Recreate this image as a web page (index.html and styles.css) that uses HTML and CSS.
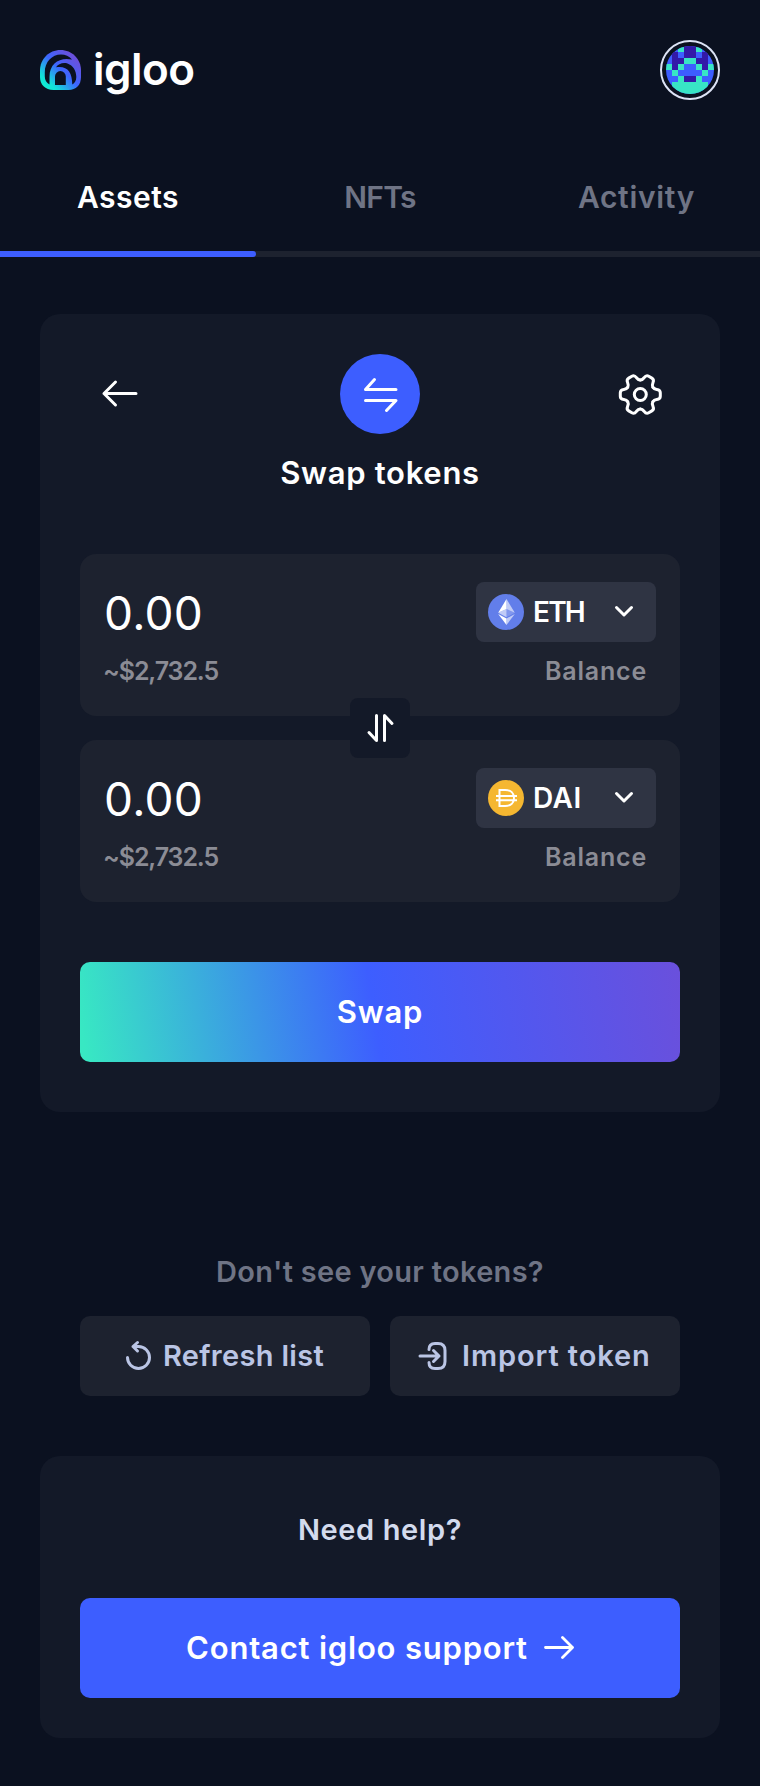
FILE: index.html
```html
<!DOCTYPE html>
<html lang="en">
<head>
<meta charset="utf-8">
<title>igloo</title>
<link rel="stylesheet" href="styles.css">
</head>
<body>
<header class="header">
  <div class="brand">
    <svg width="42" height="41" viewBox="0 0 42 41">
      <defs><linearGradient id="ice" x1="4" y1="38" x2="34" y2="7" gradientUnits="userSpaceOnUse"><stop stop-color="#0ff0d0"/><stop offset=".18" stop-color="#12e0d8"/><stop offset=".58" stop-color="#3d66ff"/><stop offset="1" stop-color="#6a50dc"/></linearGradient></defs>
      <path fill="url(#ice)" d="M20.500 0C32 0 41 9 41 20.500V27c0 8-5 13-12.500 13h-15C5 40 0 34.500 0 27v-6.500C0 9 9 0 20.500 0z"/>
      <path fill="#0b1120" d="M9.500 34.500C6.500 33 4.800 30 4.800 26.500v-4C4.800 12 12 4.600 21 4.600c4.500 0 8 1.600 11 5C20 7 9.500 13 9.500 27z"/>
      <path fill="#0b1120" d="M16 17.200C18 14 23 12 27.500 13.500 33 15.500 36.300 20.500 36.300 27c0 3.500-1.500 6-4 7.500C32 22 27.500 15.500 16 17.200z"/>
      <path fill="#0b1120" d="M15 35v-8.500a5.400 5.400 0 0 1 10.800 0V35z"/>
    </svg>
    <span class="brand-name">igloo</span>
  </div>
  <div class="avatar">
    <svg width="48" height="48" viewBox="0 0 48 48">
      <clipPath id="disc"><circle cx="24" cy="24" r="24"/></clipPath>
      <g clip-path="url(#disc)">
        <path fill="#3d5eff" d="M0 0h48v48H0z"/>
        <path fill="#3319a8" d="M18 0h12v12H18zM6 6h6v18H6zM12 12h6v6h-6zM36 6h6v18h-6zM30 12h6v6h-6zM18 30h12v6H18z"/>
        <path fill="#38e5c5" d="M12 0h6v6h-6zM30 0h6v6h-6zM18 12h12v6H18zM0 18h6v6H0zM12 18h6v6h-6zM30 18h6v6h-6zM42 18h6v6h-6zM6 24h6v6H6zM36 24h6v6h-6zM12 30h6v6h-6zM30 30h6v6h-6zM6 36h36v12H6z"/>
      </g>
    </svg>
  </div>
</header>

<nav class="tabs">
  <a class="tab tab-active">Assets</a>
  <a class="tab tab-nfts">NFTs</a>
  <a class="tab tab-activity">Activity</a>
</nav>

<main class="main">
  <section class="card swap-card">
    <div class="swap-head">
      <svg width="60" height="60" viewBox="0 0 60 60" fill="none" stroke="#fff" stroke-width="3" stroke-linecap="round" stroke-linejoin="round"><path d="M46 29.500H14M25.500 18l-11.500 11.500 11.500 11.500"/></svg>
      <div class="swap-badge">
        <svg width="40" height="40" viewBox="0 0 40 40" fill="none" stroke="#fff" stroke-width="3" stroke-linecap="round" stroke-linejoin="round"><path d="M36 15.500H5.500L14.500 5.500M5.500 26.500H36l-9.500 10"/></svg>
      </div>
      <svg width="60" height="60" viewBox="-30.300 -30.500 60 60" fill="none" stroke="#fff" stroke-width="3" stroke-linecap="round">
        <defs><path id="tooth" d="M12.600-7.200C13.600-5.400 14.800-5.300 16.500-5.100 19-4.800 20-3.400 20-1.800V1.800C20 3.400 19 4.800 16.500 5.100 14.800 5.300 13.600 5.400 12.600 7.200"/></defs>
        <circle r="6"/>
        <use href="#tooth"/><use href="#tooth" transform="rotate(60)"/><use href="#tooth" transform="rotate(120)"/><use href="#tooth" transform="rotate(180)"/><use href="#tooth" transform="rotate(240)"/><use href="#tooth" transform="rotate(300)"/>
      </svg>
    </div>
    <h1 class="swap-title">Swap tokens</h1>

    <div class="fields">
      <div class="field">
        <div class="field-row">
          <span class="amount">0.00</span>
          <div class="select">
            <svg width="36" height="36" viewBox="0 0 36 36"><circle cx="18" cy="18" r="18" fill="#627eea"/><path fill="#fff" fill-opacity=".6" d="M18.500 5v10l8.300 3.700z"/><path fill="#fff" d="M18.500 5l-8.300 13.700 8.300-3.700z"/><path fill="#fff" fill-opacity=".6" d="M18.500 24.500v6.600L26.800 20z"/><path fill="#fff" d="M18.500 31.100v-6.600L10.200 20z"/><path fill="#fff" fill-opacity=".2" d="M18.500 23.200l8.300-4.500-8.300-3.700z"/><path fill="#fff" fill-opacity=".6" d="M10.200 18.700l8.300 4.500V15z"/></svg>
            <span class="symbol symbol-eth">ETH</span>
            <svg class="chevron" width="20" height="14" viewBox="0 0 20 14" fill="none" stroke="#fff" stroke-width="3" stroke-linecap="round" stroke-linejoin="round"><path d="M2.500 2.500l7.500 7.500 7.500-7.500"/></svg>
          </div>
        </div>
        <div class="field-note"><span class="fiat">~$2,732.5</span><span class="balance">Balance</span></div>
      </div>
      <div class="field">
        <div class="field-row">
          <span class="amount">0.00</span>
          <div class="select">
            <svg width="36" height="36" viewBox="0 0 36 36" fill="none"><circle cx="18" cy="18" r="18" fill="#f5b731"/><path stroke="#fff" stroke-width="2" d="M11.500 10H17c5.500 0 9 3 9 8s-3.500 8-9 8h-5.500zM8 16h21M8 20.200h21"/></svg>
            <span class="symbol">DAI</span>
            <svg class="chevron" width="20" height="14" viewBox="0 0 20 14" fill="none" stroke="#fff" stroke-width="3" stroke-linecap="round" stroke-linejoin="round"><path d="M2.500 2.500l7.500 7.500 7.500-7.500"/></svg>
          </div>
        </div>
        <div class="field-note"><span class="fiat">~$2,732.5</span><span class="balance">Balance</span></div>
      </div>
      <div class="flip">
        <svg width="60" height="60" viewBox="0 0 60 60" fill="none" stroke="#fff" stroke-width="3" stroke-linecap="round" stroke-linejoin="round"><path d="M26.500 17.500v25l-7.500-8M34.500 42.500v-25l7.500 8"/></svg>
      </div>
    </div>

    <button class="button button-swap"><span class="swap-label">Swap</span></button>
  </section>

  <section class="missing">
    <p class="missing-title">Don't see your tokens?</p>
    <div class="missing-actions">
      <button class="ghost ghost-refresh">
        <svg width="28" height="32" viewBox="0 0 28 32" fill="none" stroke="#bac5e5" stroke-width="3" stroke-linecap="round" stroke-linejoin="round"><path d="M2.500 17.500A11 11 0 1 0 13.500 6.500H8M12.500 2.500l-4.500 4 4.500 4.500"/></svg>
        <span class="refresh-label">Refresh list</span>
      </button>
      <button class="ghost ghost-import">
        <svg width="30" height="32" viewBox="0 0 30 32" fill="none" stroke="#bac5e5" stroke-width="3" stroke-linecap="round" stroke-linejoin="round"><path d="M2 16h19M15.500 10.500l5.500 5.500-5.500 5.500M11 9.500C11 5 13.500 3.500 17 3.500h3c4.500 0 7 2 7 7v11c0 5-2.500 7-7 7h-3c-3.500 0-6-1.500-6-6"/></svg>
        <span class="import-label">Import token</span>
      </button>
    </div>
  </section>

  <section class="card help-card">
    <h2 class="help-title">Need help?</h2>
    <button class="button button-help">
      <span class="help-label">Contact igloo support</span>
      <svg width="30" height="26" viewBox="0 0 30 26" fill="none" stroke="#fff" stroke-width="2.800" stroke-linecap="round" stroke-linejoin="round"><path d="M1.500 12.500h27M18.500 2.500l10 10-10 10"/></svg>
    </button>
  </section>
</main>
</body>
</html>
```
FILE: styles.css
```css
* { box-sizing: border-box; }
body { margin: 0; width: 760px; height: 1786px; background: #0b1120; color: #fff; font-family: Inter, "Open Sans", sans-serif; font-weight: 600; }
h1, h2, p { margin: 0; font-weight: 600; }
button { border: 0; padding: 0; margin: 0; font: inherit; color: inherit; }
svg { display: block; flex: none; }
span, a { white-space: nowrap; }

.header { height: 140px; padding: 40px 40px 0; display: flex; justify-content: space-between; align-items: flex-start; }
.brand { display: flex; padding-top: 10px; gap: 11px; }
.brand-name { margin-top: -4px; font-size: 44px; line-height: 46px; letter-spacing: -0.5px; }
.avatar { width: 60px; height: 60px; border: 2px solid #dce3f5; border-radius: 50%; display: grid; place-items: center; }

.tabs { height: 117px; display: flex; border-bottom: 6px solid #1d222f; position: relative; font-size: 30px; line-height: 36px; color: #6f7485; }
.tabs::after { content: ""; position: absolute; left: 0; top: 111px; width: 256px; height: 6px; border-radius: 0 3px 3px 0; background: #3d5eff; }
.tab { flex: none; padding-top: 39px; width: 256px; text-align: center; letter-spacing: 0.5px; }
.tab-nfts { width: 248px; letter-spacing: -0.7px; }
.tab-activity { width: 265px; letter-spacing: 0.7px; }
.tab-active { color: #fff; }

.main { padding: 57px 40px 0; }
.card { background: #131928; border-radius: 20px; }
.swap-card { height: 798px; padding: 40px 40px 0; }
.swap-head { display: flex; justify-content: space-between; align-items: center; height: 80px; padding: 0 10px; }
.swap-badge { width: 80px; height: 80px; border-radius: 50%; background: #3d5eff; display: grid; place-items: center; }
.swap-title { margin-top: 21px; height: 99px; font-size: 31px; line-height: 36px; letter-spacing: 0.7px; text-align: center; }

.fields { position: relative; display: grid; gap: 24px; }
.field { height: 162px; background: #1d222f; border-radius: 16px; padding: 28px 24px 0; }
.field-row { display: flex; justify-content: space-between; height: 60px; }
.amount { font-size: 46px; line-height: 62px; font-weight: 400; letter-spacing: 0.3px; }
.select { width: 180px; height: 60px; background: #2f3443; border-radius: 8px; display: flex; align-items: center; padding: 0 22px 0 12px; }
.symbol { margin-left: 9px; font-size: 28px; line-height: 61px; letter-spacing: 0.5px; }
.symbol-eth { letter-spacing: -1.8px; }
.chevron { margin-left: auto; }
.field-note { display: flex; justify-content: space-between; padding: 0 9px 0 0; margin-top: 14px; font-size: 25px; line-height: 31px; color: #8b8c95; }
.fiat { margin-left: -1px; letter-spacing: -1.1px; }
.balance { letter-spacing: 0.8px; }
.flip { position: absolute; left: 270px; top: 144px; width: 60px; height: 60px; border-radius: 8px; background: #131928; }

.button { width: 100%; height: 100px; border-radius: 10px; display: flex; align-items: center; justify-content: center; font-size: 31px; line-height: 36px; }
.button-swap { margin-top: 60px; background: linear-gradient(81deg, #38e8c3 1%, #3d5eff 49%, #6a50dc 100%); }
.swap-label { letter-spacing: 0.8px; }

.missing { padding: 142px 40px 0; }
.missing-title { height: 62px; font-size: 29px; line-height: 36px; letter-spacing: 0.3px; color: #6f7485; text-align: center; }
.missing-actions { display: grid; grid-template-columns: 1fr 1fr; gap: 20px; }
.ghost { height: 80px; border-radius: 10px; background: #1d222f; color: #bac5e5; font-size: 29px; line-height: 36px; display: flex; align-items: center; gap: 10px; }
.ghost-refresh { padding-left: 45px; letter-spacing: 0.3px; }
.ghost-import { padding-left: 28px; gap: 14px; letter-spacing: 0.9px; }

.help-card { margin-top: 60px; height: 282px; padding: 56px 40px 0; }
.help-title { height: 86px; font-size: 29px; line-height: 36px; letter-spacing: 0.6px; color: #d3dbee; text-align: center; }
.button-help { background: #3d5eff; gap: 16px; }
.help-label { letter-spacing: 0.8px; }
```
